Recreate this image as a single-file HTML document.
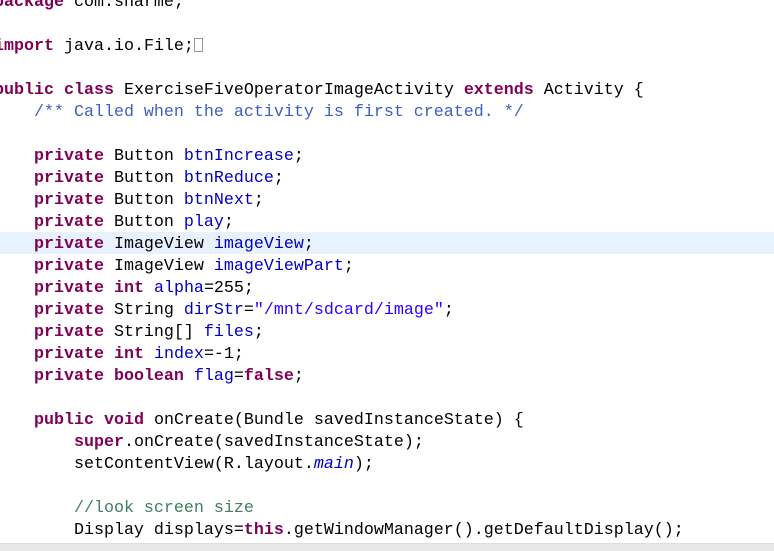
<!DOCTYPE html>
<html><head><meta charset="utf-8"><style>
html,body{margin:0;padding:0;width:774px;height:550px;overflow:hidden;background:#fff}
pre{position:absolute;left:-6px;top:-8px;margin:0;font-family:"Liberation Mono",monospace;font-size:16.67px;line-height:22px;color:#000;white-space:pre}
.k{color:#7f0055;font-weight:bold}
.f{color:#0000c0}
.d{color:#3f5fbf}
.c{color:#3f7f5f}
.s{color:#2a00ff}
.i{color:#0000c0;font-style:italic}
.hl{position:absolute;left:0;top:232px;width:774px;height:22px;background:#e8f2fe}
.bar{position:absolute;left:0;top:543px;width:774px;height:7px;background:#e8e8e8;border-top:1px solid #ddd}
.box{display:inline-block;width:9px;height:14px;border:1px solid #999;vertical-align:-2px;box-sizing:border-box}
</style></head><body>
<div class="hl"></div>
<pre><span class="k">package</span> com.sharme;

<span class="k">import</span> java.io.File;<span class="box"></span>

<span class="k">public</span> <span class="k">class</span> ExerciseFiveOperatorImageActivity <span class="k">extends</span> Activity {
    <span class="d">/** Called when the activity is first created. */</span>

    <span class="k">private</span> Button <span class="f">btnIncrease</span>;
    <span class="k">private</span> Button <span class="f">btnReduce</span>;
    <span class="k">private</span> Button <span class="f">btnNext</span>;
    <span class="k">private</span> Button <span class="f">play</span>;
    <span class="k">private</span> ImageView <span class="f">imageView</span>;
    <span class="k">private</span> ImageView <span class="f">imageViewPart</span>;
    <span class="k">private</span> <span class="k">int</span> <span class="f">alpha</span>=255;
    <span class="k">private</span> String <span class="f">dirStr</span>=<span class="s">"/mnt/sdcard/image"</span>;
    <span class="k">private</span> String[] <span class="f">files</span>;
    <span class="k">private</span> <span class="k">int</span> <span class="f">index</span>=-1;
    <span class="k">private</span> <span class="k">boolean</span> <span class="f">flag</span>=<span class="k">false</span>;

    <span class="k">public</span> <span class="k">void</span> onCreate(Bundle savedInstanceState) {
        <span class="k">super</span>.onCreate(savedInstanceState);
        setContentView(R.layout.<span class="i">main</span>);

        <span class="c">//look screen size</span>
        Display displays=<span class="k">this</span>.getWindowManager().getDefaultDisplay();
</pre>
<div class="bar"></div>
</body></html>
